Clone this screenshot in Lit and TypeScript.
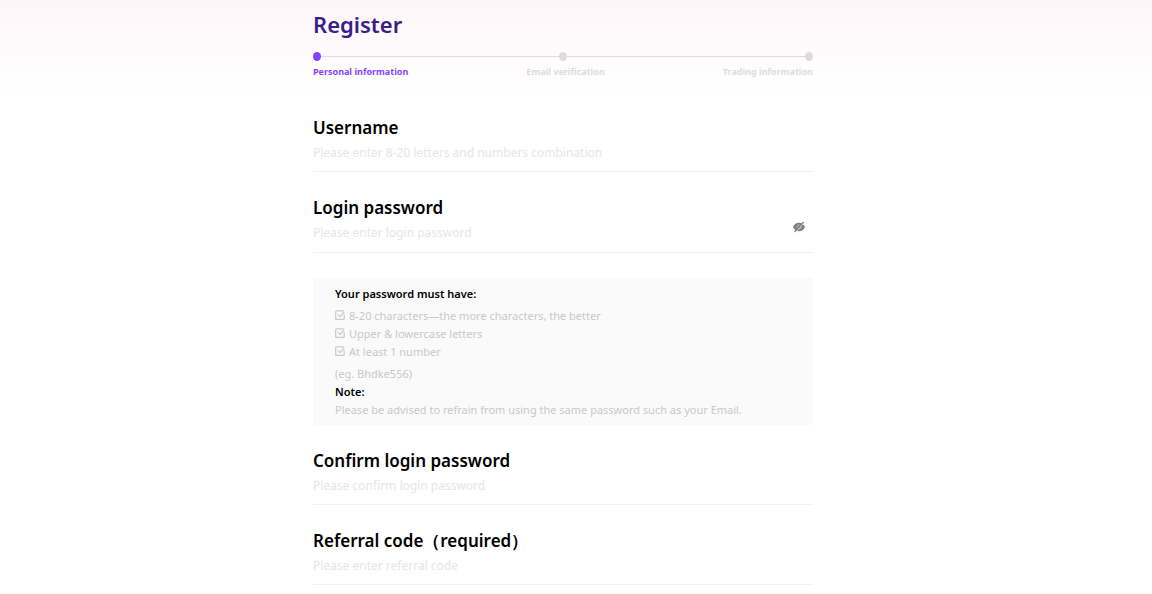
import { LitElement, html, css, svg } from "lit";
import { customElement, property, state } from "lit/decorators.js";
import { classMap } from "lit/directives/class-map.js";

const checkIcon = svg`
  <path d="M9.200 4.500V8.700a.8.800 0 0 1-.8.800H1.500A.8.800 0 0 1 .7 8.700V1.700a.8.800 0 0 1 .8-.8H9.200" />
  <path d="M3 4.400l2 2.200L9.200 2" />
`;

@customElement("step-bar")
export class StepBar extends LitElement {
  @property({ attribute: false }) steps: string[] = [];
  @property({ type: Number }) current = 0;

  static styles = css`
    :host { display: block; }
    .track, .names {
      display: flex;
      justify-content: space-between;
      list-style: none;
      margin: 0;
      padding: 0;
    }
    .track {
      align-items: center;
      height: 9px;
      background: linear-gradient(#dcdcdc, #dcdcdc) center / 100% 1px no-repeat;
    }
    .dot {
      width: 8px;
      height: 9px;
      border-radius: 50%;
      background: #dcdcdc;
    }
    .names {
      margin-top: 4px;
      color: #dcdcdc;
      font-size: 9px;
      line-height: 14px;
      font-weight: 700;
    }
    .dot.active { background: #8444ff; }
    .name.active { color: #8444ff; }
  `;

  render() {
    return html`
      <div class="track" aria-hidden="true">
        ${this.steps.map((_, i) => html`<span class=${classMap({ dot: true, active: i === this.current })}></span>`)}
      </div>
      <ol class="names">
        ${this.steps.map((s, i) => html`<li class=${classMap({ name: true, active: i === this.current })}>${s}</li>`)}
      </ol>
    `;
  }
}

@customElement("form-field")
export class FormField extends LitElement {
  @property() label = "";
  @property() hint = "";
  @property() kind: "text" | "password" = "text";
  @property({ type: Boolean }) toggle = false;
  @state() private shown = false;

  static styles = css`
    :host { display: block; }
    .field {
      display: grid;
      grid-template-columns: 1fr auto;
      border-bottom: 1px solid #f2f2f2;
    }
    .label {
      grid-column: 1 / -1;
      color: #000;
      font-size: 17px;
      line-height: 22px;
      font-weight: 600;
    }
    .input {
      min-width: 0;
      height: 32px;
      padding: 0 0 6px;
      border: 0;
      outline: 0;
      background: transparent;
      font: inherit;
      font-size: 12px;
      color: #333;
      box-sizing: border-box;
    }
    .input::placeholder { color: #e6e6e6; opacity: 1; }
    .eye {
      display: flex;
      align-items: flex-start;
      height: 33px;
      padding: 2px 8px 0 0;
      border: 0;
      background: none;
      cursor: pointer;
    }
  `;

  render() {
    return html`
      <div class="field">
        <label class="label" for="control">${this.label}</label>
        <input id="control" class="input" type=${this.shown ? "text" : this.kind} placeholder=${this.hint} />
        ${this.toggle
          ? html`<button class="eye" type="button" aria-label="Show password" @click=${() => (this.shown = !this.shown)}>
              <svg width="12" height="12" viewBox="0 0 12 12" fill="none">
                <path d="M0 6C1.200 3.200 3.300 1.700 6 1.700S10.800 3.200 12 6c-1.200 2.800-3.300 4.300-6 4.300S1.200 8.800 0 6z" fill="#808080" />
                <circle cx="6" cy="6" r="2" stroke="#c8c8c8" stroke-width=".8" />
                <path d="M2.300 11.500L11.200 1.700" stroke="#fff" stroke-width=".8" />
                <path d="M1.500 11L10.600 1" stroke="#808080" stroke-width="1.200" />
              </svg>
            </button>`
          : null}
      </div>
    `;
  }
}

@customElement("app-root")
export class AppRoot extends LitElement {
  private steps = ["Personal information", "Email verification", "Trading information"];
  private rules = ["8-20 characters—the more characters, the better", "Upper & lowercase letters", "At least 1 number"];

  static styles = css`
    :host {
      display: block;
      min-height: 100vh;
      box-sizing: border-box;
      padding: 8px 26px 9px 0;
      background: linear-gradient(#fdf6f9, #fff 100px) #fff;
      font-family: "Noto Sans", "Open Sans", sans-serif;
    }
    .page {
      width: 100%;
      max-width: 500px;
      margin: 0 auto;
    }
    .title {
      margin: 0 0 12px;
      color: #3a1d8a;
      font-size: 22px;
      line-height: 32px;
      font-weight: 600;
    }
    .form {
      display: grid;
      gap: 25px;
      margin-top: 38px;
    }
    .rules {
      padding: 7px 22px 6px;
      background: #fafafa;
      color: #c9c9c9;
      font-size: 11px;
      line-height: 18px;
    }
    .strong {
      margin: 0;
      color: #000;
      font-size: 11px;
      font-weight: 600;
    }
    .list {
      display: grid;
      list-style: none;
      margin: 4px 0;
      padding: 0;
    }
    .item { display: flex; gap: 4px; }
    .check { width: 10px; height: 10px; margin-top: 3px; }
    .text { margin: 0; }
  `;

  render() {
    return html`
      <main class="page">
        <h1 class="title">Register</h1>
        <step-bar .steps=${this.steps} .current=${0}></step-bar>
        <form class="form">
          <form-field label="Username" hint="Please enter 8-20 letters and numbers combination"></form-field>
          <form-field label="Login password" hint="Please enter login password" kind="password" toggle></form-field>
          <section class="rules">
            <h2 class="strong">Your password must have:</h2>
            <ul class="list">
              ${this.rules.map(
                (r) => html`<li class="item">
                  <svg class="check" viewBox="0 0 10 10" fill="none" stroke="#cbcbcb" stroke-width="1.300" aria-hidden="true">${checkIcon}</svg>
                  <span>${r}</span>
                </li>`
              )}
            </ul>
            <p class="text">(eg. Bhdke556)</p>
            <h2 class="strong">Note:</h2>
            <p class="text">Please be advised to refrain from using the same password such as your Email.</p>
          </section>
          <form-field label="Confirm login password" hint="Please confirm login password" kind="password"></form-field>
          <form-field label="Referral code（required）" hint="Please enter referral code"></form-field>
        </form>
      </main>
    `;
  }
}
